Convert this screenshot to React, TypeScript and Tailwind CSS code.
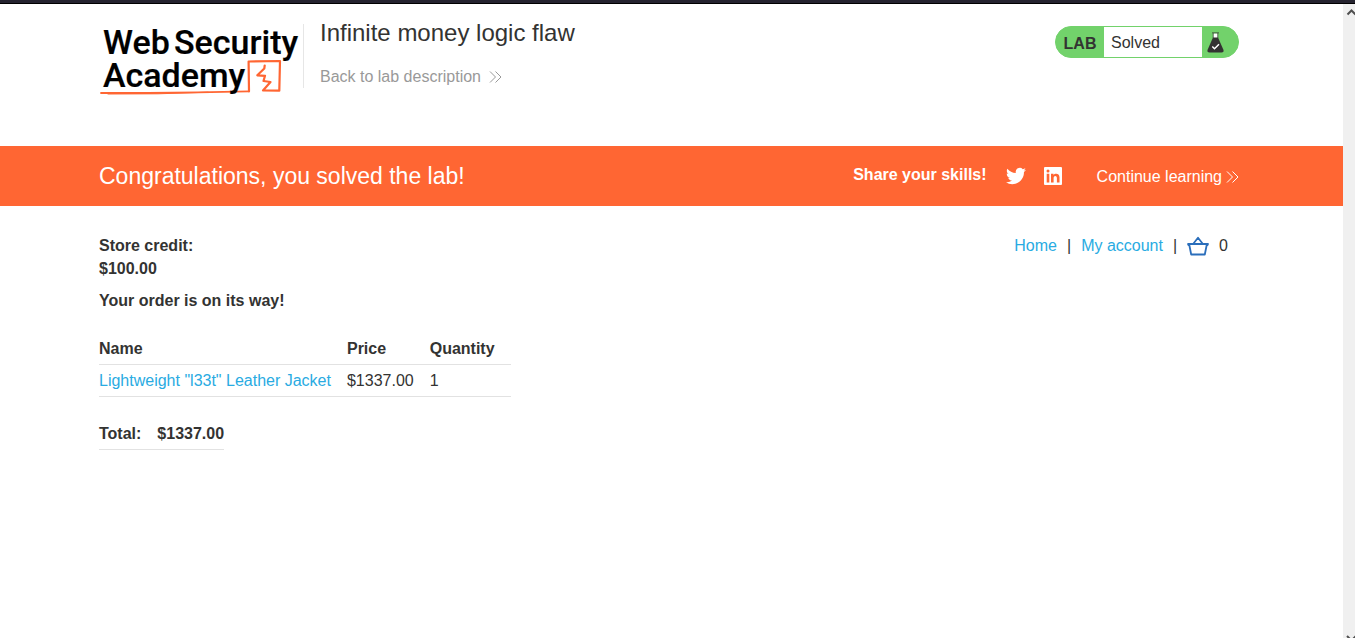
import React from "react";

function WebSecurityAcademyLogo() {
  return (
    <svg width="204" height="78" viewBox="1 0 204 78" role="img" aria-label="Web Security Academy" className="block">
      <g fill="none" stroke="#ff6633" strokeLinejoin="round" strokeLinecap="round">
        <path d="M3 69L50 69L100 68.400L151 67.300" strokeWidth="1.800" />
        <path d="M10 70L60 69.800L110 68.200" strokeWidth="1" />
        <path d="M151 67.300L150.600 37.500L182 37L181.300 66.700L165 66.500L172.500 58L165.500 57L167 51.800L159.300 51.300L166.300 44.500L166.700 41.500" strokeWidth="2.200" />
      </g>
      <g fill="#000000" stroke="#000000" strokeWidth="0.200" fontFamily="Roboto, sans-serif" fontWeight="500" fontSize="34">
        <text x="5" y="30">Web</text>
        <text x="76" y="30">Security</text>
        <text x="5" y="63">Academy</text>
      </g>
    </svg>
  );
}

function DoubleChevron({ className }: { className: string }) {
  return (
    <svg width="13" height="12" viewBox="0 0 13 12" className={className} fill="none" stroke="currentColor" strokeWidth="1" aria-hidden="true">
      <path d="M1 0.500L6.500 6L1 11.500M6.500 0.500L12 6L6.500 11.500" />
    </svg>
  );
}

function FlaskIcon() {
  return (
    <svg width="17" height="21" viewBox="0 0 17 21" aria-hidden="true">
      <path d="M6.300 1.500H10.700V6H6.300Z" fill="#ffffff" />
      <path d="M5 0.800H12M6.200 1V6M10.800 1V6" stroke="#333332" strokeWidth="0.700" fill="none" />
      <path d="M6 5.500H11L16.500 18Q17 20.500 14.500 20.500H2.500Q0 20.500 0.500 18Z" fill="#333332" />
      <path d="M5.300 14.500L7.500 16.800L12 12.300" stroke="#ffffff" strokeWidth="1.500" fill="none" />
    </svg>
  );
}

function TwitterIcon() {
  return (
    <svg width="20" height="20" viewBox="0 0 24 24" fill="#ffffff" aria-hidden="true">
      <path d="M23.950 4.570a10 10 0 0 1-2.820.770 4.960 4.960 0 0 0 2.160-2.720c-.950.550-2.010.950-3.130 1.180a4.920 4.920 0 0 0-8.390 4.480C7.690 8.090 4.070 6.130 1.640 3.160a4.820 4.820 0 0 0-.670 2.480c0 1.710.870 3.210 2.190 4.100a4.900 4.900 0 0 1-2.230-.620v.060a4.920 4.920 0 0 0 3.950 4.830 5 5 0 0 1-2.210.080 4.940 4.940 0 0 0 4.600 3.420A9.870 9.870 0 0 1 0 19.540a13.990 13.990 0 0 0 7.550 2.210c9.050 0 14-7.500 14-13.990 0-.210 0-.420-.020-.630a9.940 9.940 0 0 0 2.460-2.550z" />
    </svg>
  );
}

function LinkedInIcon() {
  return (
    <svg width="18" height="18" viewBox="0 0 18 18" aria-hidden="true">
      <rect width="18" height="18" rx="1" fill="#ffffff" />
      <g fill="#ff6633">
        <circle cx="4" cy="4" r="1.500" />
        <path d="M2.700 6.800H5.300V15.500H2.700ZM7 6.800H9.500V8C10.800 6 15.500 5.900 15.500 10.300V15.500H12.900V11C12.900 8.100 9.600 8.300 9.600 11V15.500H7Z" />
      </g>
    </svg>
  );
}

function BasketIcon() {
  return (
    <svg width="22" height="20" viewBox="0 0 22 20" fill="none" stroke="#2a6ebb" strokeWidth="1.800" strokeLinejoin="round" aria-hidden="true">
      <path d="M1 8H21L20.600 9H19.700L17.800 18.500H4.200L2.300 9H1.400ZM6.500 7.500L11 1.800L15.500 7.500" />
    </svg>
  );
}

export default function App() {
  return (
    <div className="flex min-h-screen flex-col bg-white font-['Liberation_Sans',Arial,sans-serif] text-base text-[#333332]">
      <div className="h-1 border-b border-black bg-[#25232f]" />
      <div className="flex grow">
        <div className="min-w-0 grow">
          <header className="flex h-[142px] items-start pr-[104px] pl-[99px]">
            <a href="#academy" className="mt-5 h-16 border-r border-[#e6e6e6]">
              <WebSecurityAcademyLogo />
            </a>
            <div className="mt-[15px] ml-4">
              <h2 className="text-2xl leading-7">Infinite money logic flaw</h2>
              <a href="#description" className="mt-[18px] flex items-center text-[#999999]">
                Back to lab description
                <DoubleChevron className="ml-2" />
              </a>
            </div>
            <div className="mt-[22px] ml-auto flex h-8 w-[184px] overflow-hidden rounded-full border border-[#72d26b] bg-[#72d26b]">
              <span className="flex w-12 items-center justify-center pt-1 font-bold">LAB</span>
              <p className="flex grow items-center bg-white pt-0.5 pl-[7px]">Solved</p>
              <span className="flex w-9 items-center pl-[5px]">
                <FlaskIcon />
              </span>
            </div>
          </header>

          <section className="flex h-15 items-center bg-[#ff6633] pr-[104px] pl-[99px] text-white">
            <h4 className="text-[23px]">Congratulations, you solved the lab!</h4>
            <span className="ml-auto pb-0.5 font-bold">Share your skills!</span>
            <a href="#twitter" aria-label="Share on Twitter" className="ml-[19px]">
              <TwitterIcon />
            </a>
            <a href="#linkedin" aria-label="Share on LinkedIn" className="ml-[18px]">
              <LinkedInIcon />
            </a>
            <a href="#learning" className="ml-[35px] flex items-center pt-0.5">
              Continue learning
              <DoubleChevron className="ml-1" />
            </a>
          </section>

          <main className="pt-7 pr-[104px] pl-[99px]">
            <div className="flex items-start justify-between">
              <p className="font-bold leading-[23px]">
                Store credit:
                <br />
                $100.00
              </p>
              <nav className="flex h-[23px] items-center gap-[10px] pr-[11px]">
                <a href="#home" className="text-[#29abe2]">Home</a>
                <span>|</span>
                <a href="#account" className="text-[#29abe2]">My account</a>
                <span>|</span>
                <a href="#cart" aria-label="Basket">
                  <BasketIcon />
                </a>
                <span>0</span>
              </nav>
            </div>
            <h4 className="mt-[9px] font-bold">Your order is on its way!</h4>

            <table className="mt-[19px] border-collapse text-left">
              <thead>
                <tr className="h-8 border-b border-[#e2e2e2]">
                  <th className="pt-0.5 pr-4">Name</th>
                  <th className="pt-0.5 pr-4">Price</th>
                  <th className="pt-0.5 pr-4">Quantity</th>
                </tr>
              </thead>
              <tbody>
                <tr className="h-8 border-b border-[#e2e2e2]">
                  <td className="pt-0.5 pr-4">
                    <a href="#product" className="text-[#29abe2]">Lightweight "l33t" Leather Jacket</a>
                  </td>
                  <td className="pt-0.5 pr-4">$1337.00</td>
                  <td className="pt-0.5 pr-4">1</td>
                </tr>
              </tbody>
            </table>

            <table className="mt-[21px] border-collapse text-left">
              <tbody>
                <tr className="h-8 border-b border-[#e2e2e2]">
                  <th className="pt-0.5 pr-4">Total:</th>
                  <th className="pt-0.5">$1337.00</th>
                </tr>
              </tbody>
            </table>
          </main>
        </div>

        <div className="flex w-3 shrink-0 flex-col justify-between overflow-hidden bg-[#f0f0f0] pt-1" aria-hidden="true">
          <svg width="12" height="8" viewBox="0 0 12 8" fill="none" stroke="#505050" strokeWidth="2">
            <path d="M4.500 6.500L8.500 2.500L12.500 6.500" />
          </svg>
          <svg width="12" height="3" viewBox="0 0 12 3" fill="none" stroke="#505050" strokeWidth="2">
            <path d="M4 1L8.500 5.500L13 1" />
          </svg>
        </div>
      </div>
    </div>
  );
}
